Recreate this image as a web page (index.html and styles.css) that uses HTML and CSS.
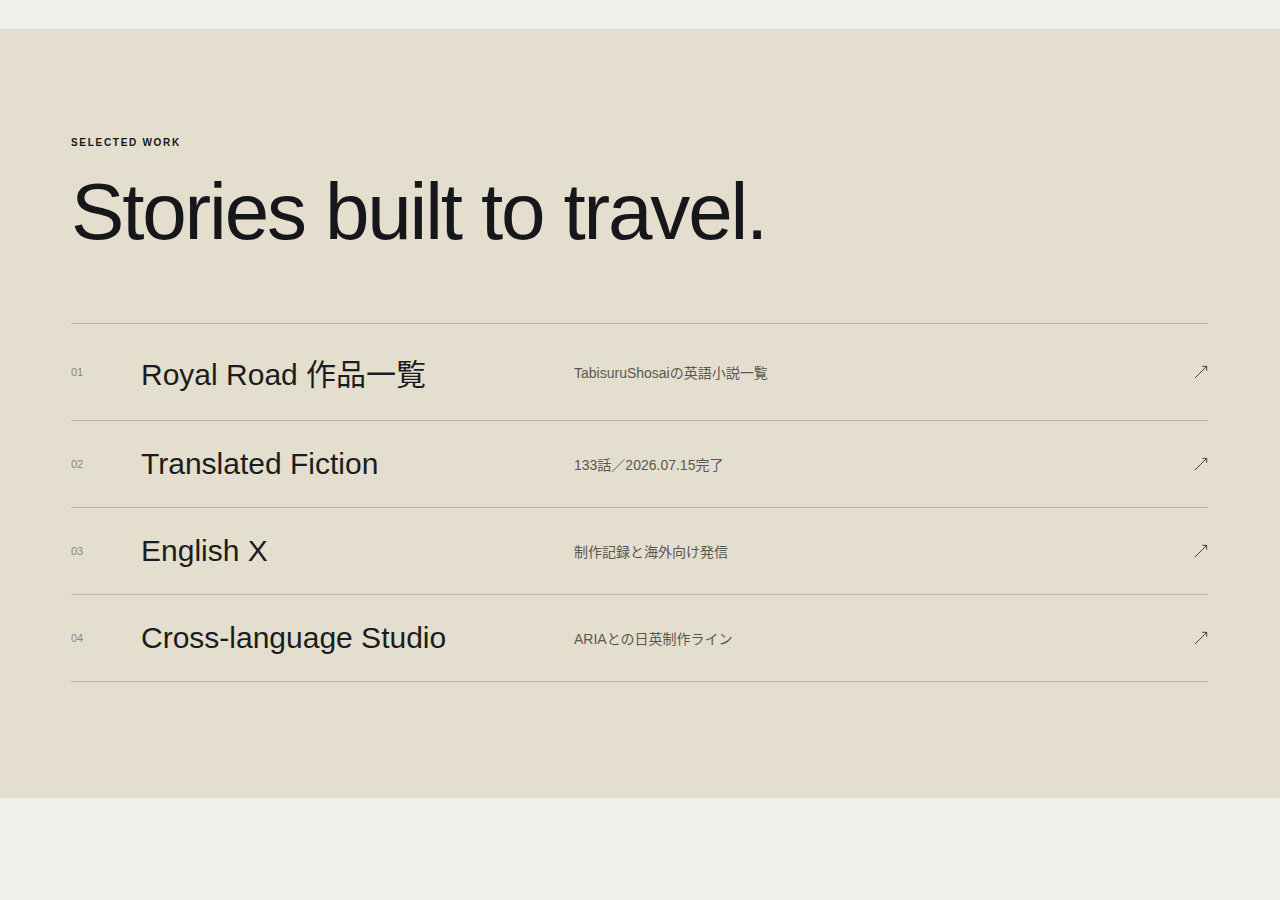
FILE: index.html
```html
<!doctype html>
<html lang="ja">
  <head>
    <meta charset="UTF-8" />
    <meta name="viewport" content="width=device-width, initial-scale=1.0" />
    <title>Selected Work</title>
    <link rel="stylesheet" href="styles.css">
  </head>
  <body>
    <section class="work">
      <div class="eyebrow">SELECTED WORK</div>
      <h2 class="work-title">Stories built to travel.</h2>

      <ul class="work-list">
        <li class="work-row">
          <span class="work-num">01</span>
          <span class="work-name">Royal Road 作品一覧</span>
          <span class="work-desc">TabisuruShosaiの英語小説一覧</span>
          <svg class="work-arrow" viewBox="0 0 16 16" aria-hidden="true"><path d="M1 15 L14.5 1.5 M9.5 1.5 H14.5 V6.5" /></svg>
        </li>
        <li class="work-row">
          <span class="work-num">02</span>
          <span class="work-name">Translated Fiction</span>
          <span class="work-desc">133話／2026.07.15完了</span>
          <svg class="work-arrow" viewBox="0 0 16 16" aria-hidden="true"><path d="M1 15 L14.5 1.5 M9.5 1.5 H14.5 V6.5" /></svg>
        </li>
        <li class="work-row">
          <span class="work-num">03</span>
          <span class="work-name">English X</span>
          <span class="work-desc">制作記録と海外向け発信</span>
          <svg class="work-arrow" viewBox="0 0 16 16" aria-hidden="true"><path d="M1 15 L14.5 1.5 M9.5 1.5 H14.5 V6.5" /></svg>
        </li>
        <li class="work-row">
          <span class="work-num">04</span>
          <span class="work-name">Cross-language Studio</span>
          <span class="work-desc">ARIAとの日英制作ライン</span>
          <svg class="work-arrow" viewBox="0 0 16 16" aria-hidden="true"><path d="M1 15 L14.5 1.5 M9.5 1.5 H14.5 V6.5" /></svg>
        </li>
      </ul>
    </section>
  </body>
</html>
```

FILE: styles.css
```css
:root {
  --page-bg: #f0efe9;
  --panel-bg: #e4dece;
  --ink: #15171a;
  --muted: #5b5851;
  --faint: #8a867d;
  --rule: #bab5a8;
}

body {
  margin: 0;
  padding: 29px 0 103px;
  background-color: var(--page-bg);
  color: var(--ink);
  font-family: 'Liberation Sans', Arial, 'Noto Sans CJK JP', sans-serif;
}

/* Work section */
.work {
  background-color: var(--panel-bg);
  padding: 108px 72px 116px 71px;
}

.eyebrow {
  font-size: 10px;
  font-weight: 700;
  letter-spacing: 0.17em;
  line-height: 12px;
}

.work-title {
  margin: 23px 0 0;
  font-size: 80px;
  font-weight: 400;
  letter-spacing: -0.027em;
  line-height: 1;
}

.work-list {
  list-style: none;
  margin: 71px 0 0;
  padding: 0;
  border-top: 1px solid var(--rule);
}

.work-row {
  display: grid;
  grid-template-columns: 70px 433px 1fr auto;
  align-items: center;
  padding: 26px 0 26px;
  border-bottom: 1px solid var(--rule);
}

.work-num {
  font-size: 11px;
  color: var(--faint);
}

.work-name {
  font-size: 30px;
  color: #1b1c1d;
}

.work-desc {
  font-size: 14px;
  color: var(--muted);
}

.work-arrow {
  width: 14px;
  height: 14px;
  fill: none;
  stroke: #3c3a36;
  stroke-width: 1.1;
}
```
